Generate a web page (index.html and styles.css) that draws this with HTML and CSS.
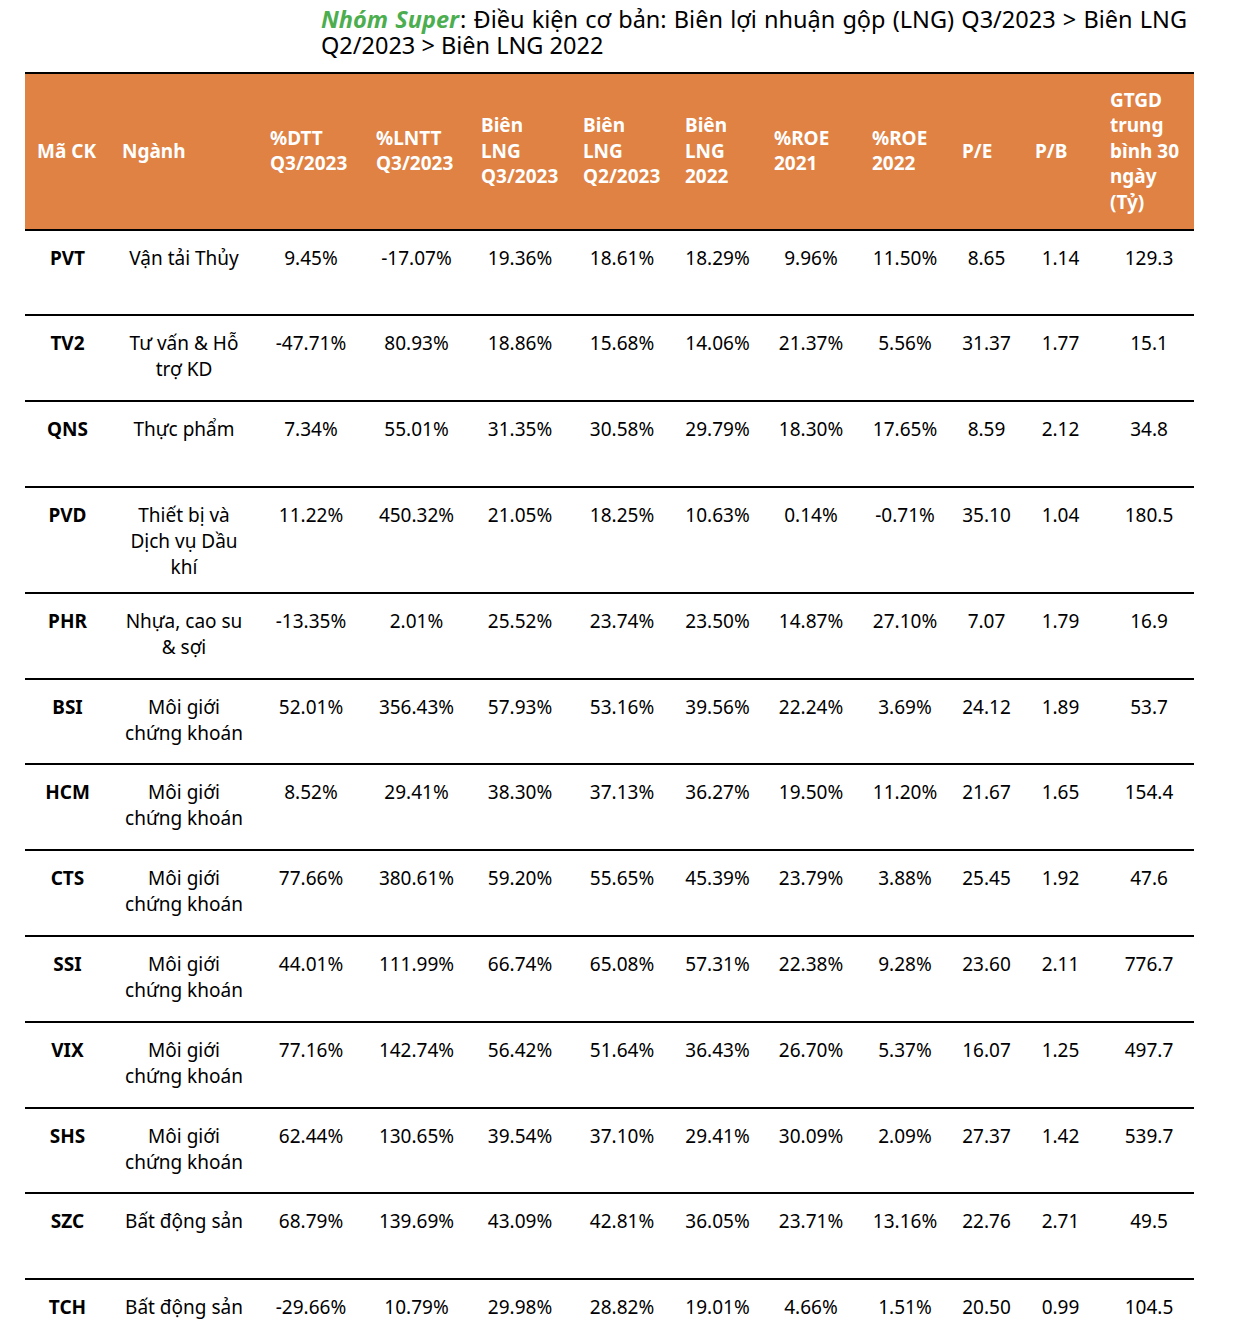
FILE: index.html
```html
<!DOCTYPE html>
<html lang="vi">
<head>
<meta charset="utf-8">
<title>Nhóm Super</title>
<link rel="stylesheet" href="styles.css">
</head>
<body>
<p class="title"><span class="group">Nhóm Super</span>: Điều kiện cơ bản: Biên lợi nhuận gộp (LNG) Q3/2023 &gt; Biên LNG Q2/2023 &gt; Biên LNG 2022</p>
<div class="table">
  <div class="row head">
    <div class="cell">Mã CK</div>
    <div class="cell">Ngành</div>
    <div class="cell">%DTT<br>Q3/2023</div>
    <div class="cell">%LNTT<br>Q3/2023</div>
    <div class="cell">Biên<br>LNG<br>Q3/2023</div>
    <div class="cell">Biên<br>LNG<br>Q2/2023</div>
    <div class="cell">Biên<br>LNG<br>2022</div>
    <div class="cell">%ROE<br>2021</div>
    <div class="cell">%ROE<br>2022</div>
    <div class="cell">P/E</div>
    <div class="cell">P/B</div>
    <div class="cell">GTGD<br>trung<br>bình 30<br>ngày<br>(Tỷ)</div>
  </div>
  <div class="row">
    <div class="cell code">PVT</div><div class="cell sector">Vận tải Thủy</div>
    <div class="cell">9.45%</div><div class="cell">-17.07%</div><div class="cell">19.36%</div><div class="cell">18.61%</div><div class="cell">18.29%</div><div class="cell">9.96%</div><div class="cell">11.50%</div><div class="cell">8.65</div><div class="cell">1.14</div><div class="cell gt">129.3</div>
  </div>
  <div class="row">
    <div class="cell code">TV2</div><div class="cell sector">Tư vấn &amp; Hỗ trợ KD</div>
    <div class="cell">-47.71%</div><div class="cell">80.93%</div><div class="cell">18.86%</div><div class="cell">15.68%</div><div class="cell">14.06%</div><div class="cell">21.37%</div><div class="cell">5.56%</div><div class="cell">31.37</div><div class="cell">1.77</div><div class="cell gt">15.1</div>
  </div>
  <div class="row">
    <div class="cell code">QNS</div><div class="cell sector">Thực phẩm</div>
    <div class="cell">7.34%</div><div class="cell">55.01%</div><div class="cell">31.35%</div><div class="cell">30.58%</div><div class="cell">29.79%</div><div class="cell">18.30%</div><div class="cell">17.65%</div><div class="cell">8.59</div><div class="cell">2.12</div><div class="cell gt">34.8</div>
  </div>
  <div class="row">
    <div class="cell code">PVD</div><div class="cell sector">Thiết bị và Dịch vụ Dầu khí</div>
    <div class="cell">11.22%</div><div class="cell">450.32%</div><div class="cell">21.05%</div><div class="cell">18.25%</div><div class="cell">10.63%</div><div class="cell">0.14%</div><div class="cell">-0.71%</div><div class="cell">35.10</div><div class="cell">1.04</div><div class="cell gt">180.5</div>
  </div>
  <div class="row">
    <div class="cell code">PHR</div><div class="cell sector">Nhựa, cao su &amp; sợi</div>
    <div class="cell">-13.35%</div><div class="cell">2.01%</div><div class="cell">25.52%</div><div class="cell">23.74%</div><div class="cell">23.50%</div><div class="cell">14.87%</div><div class="cell">27.10%</div><div class="cell">7.07</div><div class="cell">1.79</div><div class="cell gt">16.9</div>
  </div>
  <div class="row">
    <div class="cell code">BSI</div><div class="cell sector">Môi giới chứng khoán</div>
    <div class="cell">52.01%</div><div class="cell">356.43%</div><div class="cell">57.93%</div><div class="cell">53.16%</div><div class="cell">39.56%</div><div class="cell">22.24%</div><div class="cell">3.69%</div><div class="cell">24.12</div><div class="cell">1.89</div><div class="cell gt">53.7</div>
  </div>
  <div class="row">
    <div class="cell code">HCM</div><div class="cell sector">Môi giới chứng khoán</div>
    <div class="cell">8.52%</div><div class="cell">29.41%</div><div class="cell">38.30%</div><div class="cell">37.13%</div><div class="cell">36.27%</div><div class="cell">19.50%</div><div class="cell">11.20%</div><div class="cell">21.67</div><div class="cell">1.65</div><div class="cell gt">154.4</div>
  </div>
  <div class="row">
    <div class="cell code">CTS</div><div class="cell sector">Môi giới chứng khoán</div>
    <div class="cell">77.66%</div><div class="cell">380.61%</div><div class="cell">59.20%</div><div class="cell">55.65%</div><div class="cell">45.39%</div><div class="cell">23.79%</div><div class="cell">3.88%</div><div class="cell">25.45</div><div class="cell">1.92</div><div class="cell gt">47.6</div>
  </div>
  <div class="row">
    <div class="cell code">SSI</div><div class="cell sector">Môi giới chứng khoán</div>
    <div class="cell">44.01%</div><div class="cell">111.99%</div><div class="cell">66.74%</div><div class="cell">65.08%</div><div class="cell">57.31%</div><div class="cell">22.38%</div><div class="cell">9.28%</div><div class="cell">23.60</div><div class="cell">2.11</div><div class="cell gt">776.7</div>
  </div>
  <div class="row">
    <div class="cell code">VIX</div><div class="cell sector">Môi giới chứng khoán</div>
    <div class="cell">77.16%</div><div class="cell">142.74%</div><div class="cell">56.42%</div><div class="cell">51.64%</div><div class="cell">36.43%</div><div class="cell">26.70%</div><div class="cell">5.37%</div><div class="cell">16.07</div><div class="cell">1.25</div><div class="cell gt">497.7</div>
  </div>
  <div class="row">
    <div class="cell code">SHS</div><div class="cell sector">Môi giới chứng khoán</div>
    <div class="cell">62.44%</div><div class="cell">130.65%</div><div class="cell">39.54%</div><div class="cell">37.10%</div><div class="cell">29.41%</div><div class="cell">30.09%</div><div class="cell">2.09%</div><div class="cell">27.37</div><div class="cell">1.42</div><div class="cell gt">539.7</div>
  </div>
  <div class="row">
    <div class="cell code">SZC</div><div class="cell sector">Bất động sản</div>
    <div class="cell">68.79%</div><div class="cell">139.69%</div><div class="cell">43.09%</div><div class="cell">42.81%</div><div class="cell">36.05%</div><div class="cell">23.71%</div><div class="cell">13.16%</div><div class="cell">22.76</div><div class="cell">2.71</div><div class="cell gt">49.5</div>
  </div>
  <div class="row">
    <div class="cell code">TCH</div><div class="cell sector">Bất động sản</div>
    <div class="cell">-29.66%</div><div class="cell">10.79%</div><div class="cell">29.98%</div><div class="cell">28.82%</div><div class="cell">19.01%</div><div class="cell">4.66%</div><div class="cell">1.51%</div><div class="cell">20.50</div><div class="cell">0.99</div><div class="cell gt">104.5</div>
  </div>
</div>
</body>
</html>
```

FILE: styles.css
```css
html, body {
  margin: 0;
  padding: 0;
  background: #ffffff;
}

body {
  font-family: "Noto Sans", "Open Sans", sans-serif;
  color: #000000;
}

.title {
  margin: 0 0 14px 321px;
  padding-top: 6px;
  width: 866px;
  font-size: 23.5px;
  line-height: 26px;
  text-align: justify;
}

.group {
  color: #4cae4f;
  font-weight: 700;
  font-style: italic;
  padding-right: 1px;
}

.table {
  margin-left: 25px;
  width: 1169px;
  border-top: 2px solid #000000;
}

.row {
  display: grid;
  grid-template-columns: 85px 148px 106px 105px 102px 102px 89px 98px 90px 73px 75px 96px;
  min-height: 83.8px;
  border-bottom: 2px solid #000000;
  font-size: 19px;
  line-height: 26px;
}

.row .cell {
  padding: 14px 0 12px;
  text-align: center;
}

.row .sector {
  padding-left: 11px;
  padding-right: 11px;
}

.row .code {
  font-weight: 700;
}

.row .gt {
  padding-left: 6px;
}

.row.head {
  background: #df8244;
  color: #ffffff;
  font-weight: 700;
  line-height: 25.5px;
  min-height: 154.5px;
}

.row.head .cell {
  display: flex;
  align-items: center;
  text-align: left;
  padding: 0 0 0 12px;
}
```
